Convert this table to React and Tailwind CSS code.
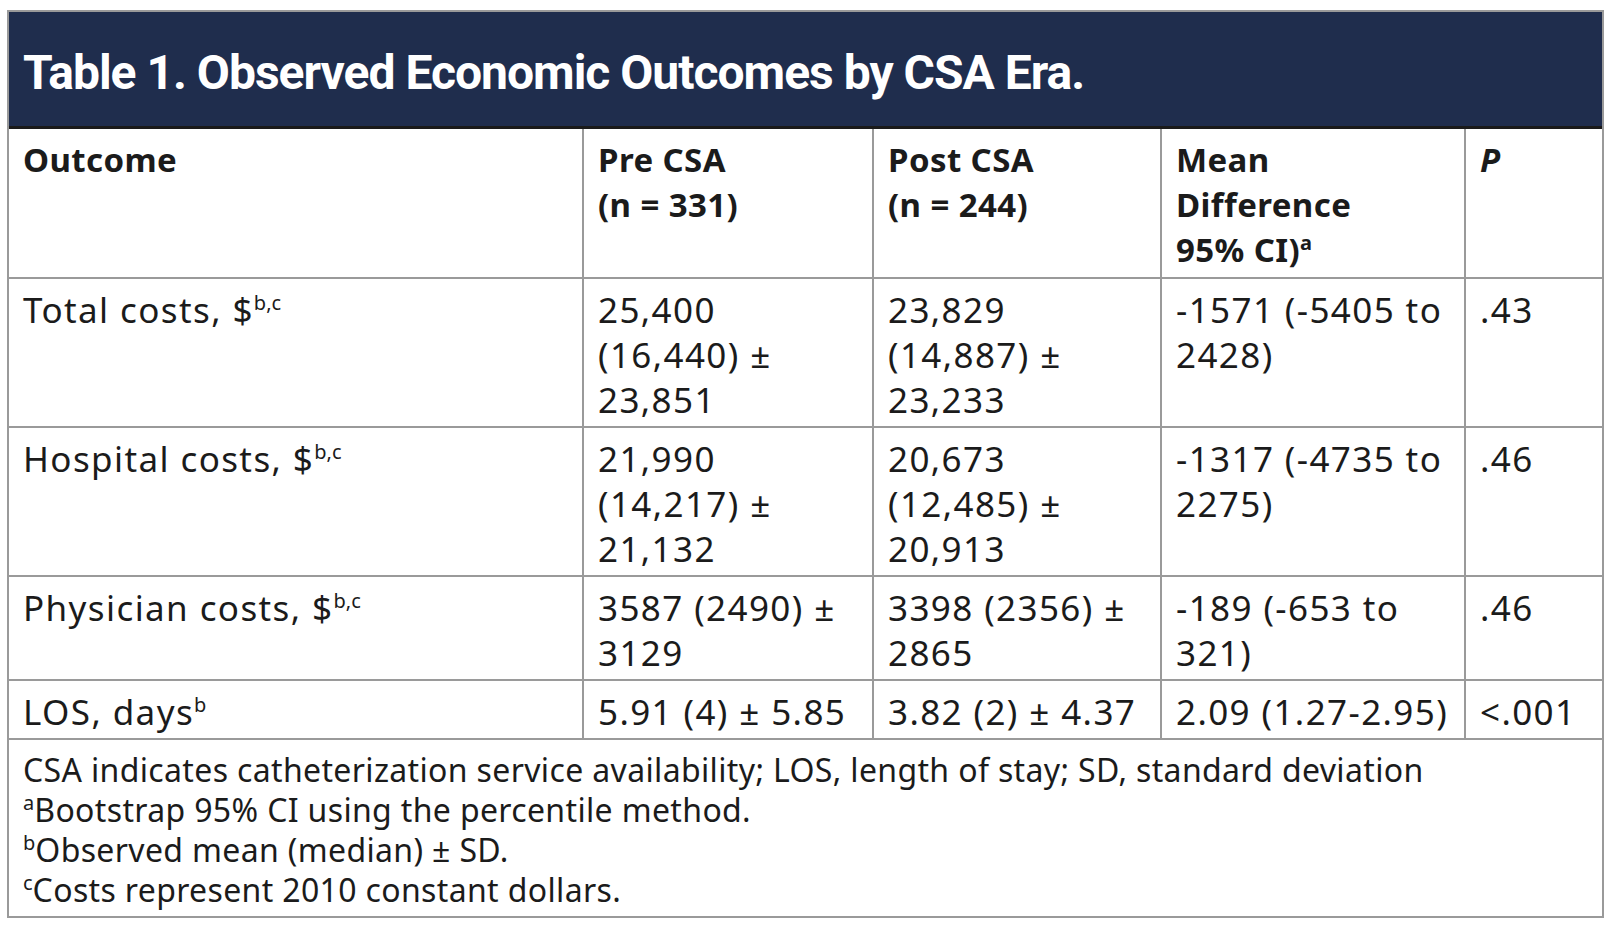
import React from "react";

const F = { fontFamily: "'Noto Sans', 'Liberation Sans', sans-serif" };
const T = { fontFamily: "Roboto, 'Noto Sans', sans-serif" };

function Sup({ children }) {
  return <span className="text-[20px] align-super leading-none tracking-normal">{children}</span>;
}

const rows = [
  {
    o: <>Total costs, $<Sup>b,c</Sup></>,
    pre: <>25,400<br />(16,440) ±<br />23,851</>,
    post: <>23,829<br />(14,887) ±<br />23,233</>,
    md: <>-1571 (-5405 to<br />2428)</>,
    p: ".43",
  },
  {
    o: <>Hospital costs, $<Sup>b,c</Sup></>,
    pre: <>21,990<br />(14,217) ±<br />21,132</>,
    post: <>20,673<br />(12,485) ±<br />20,913</>,
    md: <>-1317 (-4735 to<br />2275)</>,
    p: ".46",
  },
  {
    o: <>Physician costs, $<Sup>b,c</Sup></>,
    pre: <>3587 (2490) ±<br />3129</>,
    post: <>3398 (2356) ±<br />2865</>,
    md: <>-189 (-653 to<br />321)</>,
    p: ".46",
  },
  {
    o: <>LOS, days<Sup>b</Sup></>,
    pre: <>5.91 (4) ± 5.85</>,
    post: <>3.82 (2) ± 4.37</>,
    md: <>2.09 (1.27-2.95)</>,
    p: "<.001",
  },
];

export default function App() {
  const td = "border-2 border-[#9a9a9a] align-top pl-[14px] pr-[4px] pt-[8px] pb-[4px] whitespace-nowrap";
  return (
    <div className="w-[1612px] h-[928px] bg-white text-[#1b1b1b]" style={F}>
      <div className="pt-[10px] pl-[7px]">
        <div className="w-[1597px] border-2 border-[#9a9a9a]">
          <div className="h-[117px] bg-[#1f2d4d] border-b-[3px] border-[#1a1a1a] flex items-center pl-[14px] pt-[8px]">
            <h1 className="text-[48px] font-bold text-white leading-none tracking-[-1px]" style={T}>Table 1. Observed Economic Outcomes by CSA Era.</h1>
          </div>
          <table className="w-full border-collapse table-fixed -mb-[2px]">
            <colgroup>
              <col className="w-[574px]" />
              <col className="w-[290px]" />
              <col className="w-[288px]" />
              <col className="w-[304px]" />
              <col />
            </colgroup>
            <thead>
              <tr className="text-[33px] font-bold leading-[45px] tracking-[0.4px]">
                <th className={`${td} border-l-0 border-t-0 text-left h-[149px]`}>Outcome</th>
                <th className={`${td} border-t-0 text-left`}>Pre CSA<br />(n = 331)</th>
                <th className={`${td} border-t-0 text-left`}>Post CSA<br />(n = 244)</th>
                <th className={`${td} border-t-0 text-left`}>Mean<br />Difference<br />95% CI)<Sup>a</Sup></th>
                <th className={`${td} border-t-0 border-r-0 text-left italic`}>P</th>
              </tr>
            </thead>
            <tbody className="text-[35px] leading-[45px] tracking-[1.4px]">
              {rows.map((r, i) => (
                <tr key={i}>
                  <td className={`${td} border-l-0`}>{r.o}</td>
                  <td className={td}>{r.pre}</td>
                  <td className={td}>{r.post}</td>
                  <td className={td}>{r.md}</td>
                  <td className={`${td} border-r-0`}>{r.p}</td>
                </tr>
              ))}
              <tr>
                <td colSpan={5} className="border-2 border-[#9a9a9a] border-l-0 border-r-0 pl-[14px] pt-[10px] pb-[6px] text-[32px] leading-[40px] tracking-[0.35px]">
                  <div>CSA indicates catheterization service availability; LOS, length of stay; SD, standard deviation</div>
                  <div><Sup>a</Sup>Bootstrap 95% CI using the percentile method.</div>
                  <div><Sup>b</Sup>Observed mean (median) ± SD.</div>
                  <div><Sup>c</Sup>Costs represent 2010 constant dollars.</div>
                </td>
              </tr>
            </tbody>
          </table>
        </div>
      </div>
    </div>
  );
}
